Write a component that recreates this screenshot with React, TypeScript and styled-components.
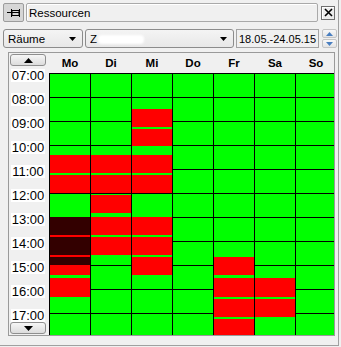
import styled, { createGlobalStyle } from 'styled-components'

const GlobalStyle = createGlobalStyle`
  html, body {
    margin: 0;
    padding: 0;
    background: #f0f0f0;
  }
  body {
    font-family: "Liberation Sans", Arial, sans-serif;
    font-size: 11px;
    color: #000;
  }
`

const GREEN = '#00ff00'
const RED = '#ff0000'
const DARK = '#330000'
const GRID_TOP = 74

const Frame = styled.div`
  width: 338px;
  height: 345px;
  background: #f0f0f0;
  border-right: 1px solid #a0a0a0;
  border-bottom: 1px solid #a0a0a0;
  display: flex;
  flex-direction: column;
  overflow: hidden;
`

const TitleBar = styled.div`
  display: flex;
  align-items: center;
  height: 19px;
  margin: 3px 0 0 3px;
`

const PinButton = styled.div`
  width: 19px;
  height: 17px;
  border: 1px solid #9c9c9c;
  border-radius: 2px;
  background: #d6d6d6;
  display: flex;
  align-items: center;
  justify-content: center;
`

const TitleBox = styled.div`
  width: 288px;
  height: 17px;
  margin-left: 2px;
  border: 1px solid #a9a9a9;
  border-radius: 2px;
  background: #f0f0f0;
  box-shadow: inset 1px 1px 0 #fff;
  display: flex;
  align-items: center;
  padding-left: 2px;
  box-sizing: content-box;
  font-size: 11.5px;
`

const CloseButton = styled.div`
  width: 12px;
  height: 12px;
  margin-left: 3px;
  border: 1px solid #6f6f6f;
  background: #ececec;
  box-shadow: inset 1px 1px 0 #fff;
  display: flex;
  align-items: center;
  justify-content: center;
`

const Toolbar = styled.div`
  display: flex;
  align-items: center;
  height: 19px;
  margin: 7px 0 0 3px;
  gap: 2px;
`

const Combo = styled.div<{ $w: number }>`
  width: ${p => p.$w}px;
  height: 19px;
  border: 1px solid #8c8c8c;
  border-radius: 3px;
  background: linear-gradient(#f4f4f4, #e8e8e8);
  display: flex;
  align-items: center;
  padding: 0 6px 0 4px;
  box-sizing: border-box;
`

const ComboText = styled.span`
  flex: 1;
  white-space: nowrap;
  overflow: hidden;
  font-size: 11.5px;
`

const Blur = styled.span`
  display: inline-block;
  width: 46px;
  height: 9px;
  margin-left: 1px;
  vertical-align: middle;
  background: #fff;
  border-radius: 4px;
  filter: blur(1.2px);
`

const DateBox = styled.div`
  width: 83px;
  height: 19px;
  box-sizing: border-box;
  border: 1px solid #a4a4a4;
  background: #f0f0f0;
  display: flex;
  align-items: center;
  padding-left: 2px;
  font-size: 11px;
  white-space: nowrap;
  overflow: hidden;
`

const Spinner = styled.div`
  width: 15px;
  height: 19px;
  margin-left: 1px;
  display: flex;
  flex-direction: column;
  gap: 1px;
`

const SpinPart = styled.div`
  flex: 1;
  border: 1px solid #c4c4c4;
  border-radius: 2px;
  background: linear-gradient(#f8f8f8, #e4e4e4);
  display: flex;
  align-items: center;
  justify-content: center;
`

const Panel = styled.div`
  width: 325px;
  height: 282px;
  margin: 4px 0 0 8px;
  border: 1px solid #9a9a9a;
  display: flex;
  overflow: hidden;
  position: relative;
`

const TimeColumn = styled.div`
  width: 40px;
  flex: none;
  display: flex;
  flex-direction: column;
  gap: 11px;
  padding: 16px 0 0 2px;
  box-sizing: border-box;
  position: relative;
`

const TimeLabel = styled.div`
  width: 34px;
  height: 13px;
  line-height: 13px;
  background: #fff;
  font-size: 13px;
  text-align: center;
  flex: none;
`

const ScrollButton = styled.div<{ $down?: boolean }>`
  position: absolute;
  left: 1px;
  width: 34px;
  height: 10px;
  ${p => (p.$down ? 'bottom: 1px;' : 'top: 1px;')}
  border: 1px solid #8e8e8e;
  border-radius: 3px;
  background: linear-gradient(#f6f6f6, #dcdcdc);
  display: flex;
  align-items: center;
  justify-content: center;
`

const DaysRow = styled.div`
  display: flex;
  flex: none;
`

const DayColumn = styled.div`
  width: 41px;
  flex: none;
  display: flex;
  flex-direction: column;
`

const DayHead = styled.div`
  height: 20px;
  display: flex;
  align-items: center;
  justify-content: center;
  padding-left: 1px;
  font-weight: bold;
  font-size: 11.5px;
`

const DayBody = styled.div`
  position: relative;
  height: 262px;
  border-left: 1px solid #000;
  background: repeating-linear-gradient(
    to bottom,
    #000 0,
    #000 1px,
    ${GREEN} 1px,
    ${GREEN} 24px
  );
`

const Booking = styled.div<{ $c: string }>`
  position: absolute;
  left: 0;
  right: 0;
  background: ${p => p.$c};
`

type Block = [number, number, string]

const days: { name: string; blocks: Block[] }[] = [
  {
    name: 'Mo',
    blocks: [
      [156, 174, RED], [176, 194, RED],
      [218, 236, DARK], [236, 238, RED], [238, 256, DARK], [256, 258, RED], [258, 266, DARK],
      [266, 276, RED], [279, 298, RED],
    ],
  },
  {
    name: 'Di',
    blocks: [[156, 174, RED], [176, 194, RED], [196, 214, RED], [218, 236, RED], [238, 256, RED]],
  },
  {
    name: 'Mi',
    blocks: [
      [110, 128, RED], [130, 147, RED], [156, 174, RED], [176, 194, RED],
      [218, 236, RED], [238, 256, RED], [258, 276, RED],
    ],
  },
  { name: 'Do', blocks: [] },
  { name: 'Fr', blocks: [[258, 276, RED], [279, 298, RED], [300, 318, RED], [320, 340, RED]] },
  { name: 'Sa', blocks: [[279, 298, RED], [300, 318, RED]] },
  { name: 'So', blocks: [] },
]

const hours = ['07:00', '08:00', '09:00', '10:00', '11:00', '12:00', '13:00', '14:00', '15:00', '16:00', '17:00']

function PinIcon() {
  return (
    <svg width="13" height="10" viewBox="0 0 13 10">
      <path d="M0 4.5h4" stroke="#000" />
      <path d="M4.5 1v8" stroke="#000" />
      <rect x="5" y="2.5" width="7" height="5" fill="none" stroke="#000" />
      <path d="M5 4.5h7" stroke="#000" />
      <path d="M12.5 1v8" stroke="#000" />
    </svg>
  )
}

function Arrow({ up, color = '#000', w = 7 }: { up?: boolean; color?: string; w?: number }) {
  const h = Math.ceil(w / 2)
  return (
    <svg width={w} height={h} viewBox={`0 0 ${w} ${h}`}>
      <polygon points={up ? `0,${h} ${w},${h} ${w / 2},0` : `0,0 ${w},0 ${w / 2},${h}`} fill={color} />
    </svg>
  )
}

export default function App() {
  return (
    <>
      <GlobalStyle />
      <Frame>
        <TitleBar>
          <PinButton>
            <PinIcon />
          </PinButton>
          <TitleBox>Ressourcen</TitleBox>
          <CloseButton>
            <svg width="9" height="9" viewBox="0 0 9 9">
              <path d="M1 1l7 7M8 1l-7 7" stroke="#000" strokeWidth="1.6" />
            </svg>
          </CloseButton>
        </TitleBar>

        <Toolbar>
          <Combo $w={80}>
            <ComboText>Räume</ComboText>
            <Arrow />
          </Combo>
          <Combo $w={149}>
            <ComboText>
              Z<Blur />
            </ComboText>
            <Arrow />
          </Combo>
          <DateBox>18.05.-24.05.15</DateBox>
          <Spinner>
            <SpinPart>
              <Arrow up color="#4a7fc0" w={7} />
            </SpinPart>
            <SpinPart>
              <Arrow color="#4a7fc0" w={7} />
            </SpinPart>
          </Spinner>
        </Toolbar>

        <Panel>
          <TimeColumn>
            {hours.map(h => (
              <TimeLabel key={h}>{h}</TimeLabel>
            ))}
            <ScrollButton>
              <Arrow up w={9} />
            </ScrollButton>
            <ScrollButton $down>
              <Arrow w={9} />
            </ScrollButton>
          </TimeColumn>
          <DaysRow>
            {days.map(d => (
              <DayColumn key={d.name}>
                <DayHead>{d.name}</DayHead>
                <DayBody>
                  {d.blocks.map(([a, b, c], i) => (
                    <Booking key={i} $c={c} style={{ top: a - GRID_TOP, height: b - a }} />
                  ))}
                </DayBody>
              </DayColumn>
            ))}
          </DaysRow>
        </Panel>
      </Frame>
    </>
  )
}
